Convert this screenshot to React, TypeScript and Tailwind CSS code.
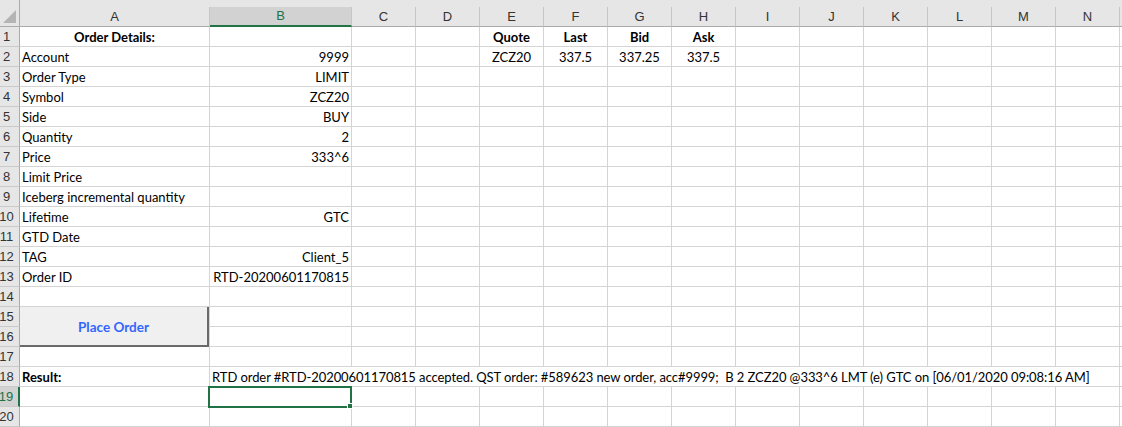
import React from "react";

// 열 정의: 이름과 너비(오른쪽 테두리 포함)
const columns = [
  { name: "A", width: 190 },
  { name: "B", width: 142 },
  ...["C", "D", "E", "F", "G", "H", "I", "J", "K", "L", "M", "N"].map((name) => ({ name, width: 64 })),
];

type Cell = { text: string; align?: "left" | "right" | "center"; bold?: boolean };

// 행별 셀 내용
const sheet: Record<number, Record<string, Cell>> = {
  1: {
    A: { text: "Order Details:", align: "center", bold: true },
    E: { text: "Quote", align: "center", bold: true },
    F: { text: "Last", align: "center", bold: true },
    G: { text: "Bid", align: "center", bold: true },
    H: { text: "Ask", align: "center", bold: true },
  },
  2: {
    A: { text: "Account" },
    B: { text: "9999", align: "right" },
    E: { text: "ZCZ20", align: "center" },
    F: { text: "337.5", align: "center" },
    G: { text: "337.25", align: "center" },
    H: { text: "337.5", align: "center" },
  },
  3: { A: { text: "Order Type" }, B: { text: "LIMIT", align: "right" } },
  4: { A: { text: "Symbol" }, B: { text: "ZCZ20", align: "right" } },
  5: { A: { text: "Side" }, B: { text: "BUY", align: "right" } },
  6: { A: { text: "Quantity" }, B: { text: "2", align: "right" } },
  7: { A: { text: "Price" }, B: { text: "333^6", align: "right" } },
  8: { A: { text: "Limit Price" } },
  9: { A: { text: "Iceberg incremental quantity" } },
  10: { A: { text: "Lifetime" }, B: { text: "GTC", align: "right" } },
  11: { A: { text: "GTD Date" } },
  12: { A: { text: "TAG" }, B: { text: "Client_5", align: "right" } },
  13: { A: { text: "Order ID" }, B: { text: "RTD-20200601170815", align: "right" } },
  18: { A: { text: "Result:", bold: true } },
};

const resultText =
  "RTD order #RTD-20200601170815 accepted. QST order: #589623 new order, acc#9999;  B 2 ZCZ20 @333^6 LMT (e) GTC on [06/01/2020 09:08:16 AM]";

const cellFont = "font-['Lato','Noto_Sans',sans-serif] text-[13px] text-black";

function DataCell({ cell, width }: { cell?: Cell; width: number }) {
  const align =
    cell?.align === "right" ? "justify-end" : cell?.align === "center" ? "justify-center" : "justify-start";
  return (
    <div
      className={`flex items-center h-[20px] shrink-0 border-r border-b border-[#d4d4d4] px-[2px] pt-[2px] overflow-hidden whitespace-nowrap ${align} ${cellFont} ${
        cell?.bold ? "font-bold" : ""
      }`}
      style={{ width }}
    >
      {cell?.text}
    </div>
  );
}

function RowHeader({ n }: { n: number }) {
  const selected = n === 19;
  return (
    <div
      className={`flex items-center justify-center pr-[6px] pt-[1px] w-[20px] h-[20px] shrink-0 border-b border-[#cacaca] font-['Liberation_Sans',sans-serif] text-[13px] ${
        selected
          ? "bg-[#d2d2d2] text-[#217346] border-r-2 border-r-[#217346]"
          : "bg-[#e6e6e6] text-[#333] border-r border-r-[#ababab]"
      }`}
    >
      {n}
    </div>
  );
}

export default function App() {
  const rows = Array.from({ length: 20 }, (_, i) => i + 1);

  return (
    <div className="relative w-[1122px] h-[427px] overflow-hidden bg-white">
      {/* 열 머리글 */}
      <div className="flex items-end h-[27px] bg-[#e6e6e6]">
        <div className="relative w-[20px] h-[27px] shrink-0 border-r border-b border-[#ababab]">
          <svg className="absolute left-0 top-0" width="20" height="27" viewBox="0 0 20 27">
            <polygon points="16,10 16,23 3,23" fill="#b4b4b4" />
          </svg>
        </div>
        {columns.map((col) => (
          <div
            key={col.name}
            className={`flex items-center justify-center h-[20px] shrink-0 border-r border-[#c6c6c6] font-['Liberation_Sans',sans-serif] text-[13px] ${
              col.name === "B"
                ? "bg-[#d2d2d2] text-[#217346] border-b-2 border-b-[#217346]"
                : "text-[#333] border-b border-b-[#ababab]"
            }`}
            style={{ width: col.width }}
          >
            {col.name}
          </div>
        ))}
        <div className="flex-1 h-[20px] border-b border-[#ababab]" />
      </div>

      {/* 데이터 행 */}
      {rows.map((r) => (
        <div key={r} className="flex h-[20px]">
          <RowHeader n={r} />
          {r === 18 ? (
            <>
              <DataCell cell={sheet[18].A} width={190} />
              <div
                className={`flex items-center h-[20px] w-[910px] shrink-0 border-r border-b border-[#d4d4d4] px-[2px] pt-[2px] whitespace-pre tracking-[-0.07px] ${cellFont}`}
              >
                {resultText}
              </div>
            </>
          ) : (
            columns.map((col) =>
              r === 19 && col.name === "B" ? (
                <div key={col.name} className="relative">
                  <DataCell width={col.width} />
                  {/* 선택된 셀 */}
                  <div className="absolute left-[-2px] top-[-1px] w-[144px] h-[22px] border-2 border-[#217346]" />
                  <div className="absolute left-[137px] top-[16px] w-[6px] h-[6px] bg-[#217346] border border-white" />
                </div>
              ) : (
                <DataCell key={col.name} cell={sheet[r]?.[col.name]} width={col.width} />
              )
            )
          )}
          <div className="flex-1 h-[20px] border-b border-[#d4d4d4]" />
        </div>
      ))}

      {/* 주문 버튼 */}
      <button
        type="button"
        className="absolute left-[20px] top-[307px] w-[189px] h-[40px] pt-[2px] bg-[#f0f0f0] border-r-2 border-b-2 border-[#6a6a6a] font-['Lato','Noto_Sans',sans-serif] text-[13.5px] font-bold text-[#3366ff]"
      >
        Place Order
      </button>
    </div>
  );
}
